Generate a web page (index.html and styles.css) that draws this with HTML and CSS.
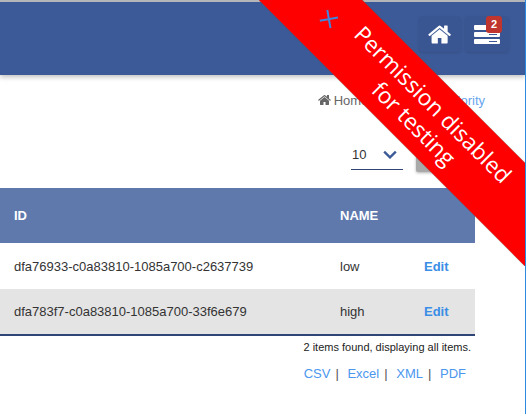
FILE: index.html
```html
<!DOCTYPE html>
<html lang="en">
<head>
  <meta charset="UTF-8" />
  <title>Priority</title>
  <link rel="stylesheet" href="styles.css">
</head>
<body>
  <!-- Top bar -->
  <header class="topbar">
    <a class="top-btn top-btn-home" href="#">
      <svg class="icon-home" viewBox="0 0 1792 1792"><path d="M1408 992v480q0 26-19 45t-45 19h-384v-384h-256v384h-384q-26 0-45-19t-19-45v-480q0-1 .5-3t.5-3l575-474 575 474q1 2 1 6zm223-69l-62 74q-8 9-21 11h-3q-13 0-21-7l-692-577-692 577q-12 8-24 7-13-2-21-11l-62-74q-8-10-7-23.5t11-21.5l719-599q32-26 76-26t76 26l244 204v-195q0-14 9-23t23-9h192q14 0 23 9t9 23v408l219 182q10 8 11 21.5t-7 23.5z"/></svg>
    </a>
    <a class="top-btn top-btn-stack" href="#">
      <span class="stack">
        <span class="stack-bar"></span>
        <span class="stack-bar"><i></i></span>
        <span class="stack-bar"><i></i></span>
      </span>
      <span class="badge">2</span>
    </a>
  </header>

  <!-- Breadcrumb -->
  <nav class="crumbs">
    <svg class="icon-crumb" viewBox="0 0 1792 1792"><path d="M1408 992v480q0 26-19 45t-45 19h-384v-384h-256v384h-384q-26 0-45-19t-19-45v-480q0-1 .5-3t.5-3l575-474 575 474q1 2 1 6zm223-69l-62 74q-8 9-21 11h-3q-13 0-21-7l-692-577-692 577q-12 8-24 7-13-2-21-11l-62-74q-8-10-7-23.5t11-21.5l719-599q32-26 76-26t76 26l244 204v-195q0-14 9-23t23-9h192q14 0 23 9t9 23v408l219 182q10 8 11 21.5t-7 23.5z"/></svg>
    <span class="crumb-home">Home</span>
    <span class="crumb-sep">/</span>
    <a href="#">Manage Priority</a>
  </nav>

  <!-- Page size + add button -->
  <div class="toolbar">
    <div class="page-size">
      <span>10</span>
      <svg class="chevron" viewBox="0 0 12 7"><path d="M1 1l5 5 5-5"/></svg>
    </div>
    <div class="add-btn"></div>
  </div>

  <table class="grid">
    <thead>
      <tr><th class="col-id">ID</th><th class="col-name">NAME</th><th></th></tr>
    </thead>
    <tbody>
      <tr><td>dfa76933-c0a83810-1085a700-c2637739</td><td>low</td><td><a class="edit" href="#">Edit</a></td></tr>
      <tr class="alt"><td>dfa783f7-c0a83810-1085a700-33f6e679</td><td>high</td><td><a class="edit" href="#">Edit</a></td></tr>
    </tbody>
  </table>

  <div class="grid-foot">
    <p class="found">2 items found, displaying all items.</p>
    <p class="exports">
      <a href="#">CSV</a><span class="sep">|</span>
      <a href="#">Excel</a><span class="sep">|</span>
      <a href="#">XML</a><span class="sep">|</span>
      <a href="#">PDF</a>
    </p>
  </div>

  <!-- Corner ribbon -->
  <div class="ribbon-box">
    <div class="ribbon">
      <svg class="ribbon-close" viewBox="0 0 20 20"><path d="M3.5 3.5l13 13M16.5 3.5l-13 13"/></svg>
      <span>Permission disabled</span>
      <span>for testing</span>
    </div>
  </div>
</body>
</html>
```

FILE: styles.css
```css
/* Reset & base styles */
* {
  margin: 0;
  padding: 0;
  box-sizing: border-box;
}
html, body {
  width: 100%;
  height: 100%;
  overflow: hidden;
  background: #fff;
  font-family: "Liberation Sans", Arial, sans-serif;
  color: #333;
}
body {
  position: relative;
  border-right: 1px solid #2a8ae0;
}
a {
  text-decoration: none;
}

/* Top bar */
.topbar {
  height: 75px;
  display: flex;
  justify-content: flex-end;
  align-items: flex-start;
  gap: 4px;
  padding: 14px 16px 0 0;
  background: #3d5a98;
  border-top: 2px solid #b4b6ba;
  box-shadow: 0 2px 5px rgba(0,0,0,0.25);
}
.top-btn {
  position: relative;
  display: flex;
  align-items: center;
  justify-content: center;
  height: 36px;
  border-radius: 4px;
  background: #3a5692;
  box-shadow: 0 1px 3px rgba(0,0,0,0.12);
}
.top-btn-home {
  width: 42px;
}
.top-btn-stack {
  width: 44px;
}
.icon-home {
  width: 25px;
  height: 25px;
  fill: #fff;
}
.stack {
  display: flex;
  flex-direction: column;
  gap: 2px;
  width: 26px;
}
.stack-bar {
  display: flex;
  justify-content: flex-end;
  align-items: center;
  height: 5px;
  background: #fff;
  border-radius: 1px;
  padding-right: 3px;
}
.stack-bar i {
  width: 8px;
  height: 1px;
  background: #3d5a98;
}
.badge {
  position: absolute;
  top: 0;
  right: 7px;
  width: 16px;
  height: 17px;
  line-height: 16px;
  text-align: center;
  font-size: 11px;
  font-weight: bold;
  color: #fff;
  background: #c0352d;
  border-radius: 3px;
}

/* Breadcrumb */
.crumbs {
  display: flex;
  justify-content: flex-end;
  align-items: center;
  gap: 11px;
  height: 20px;
  margin-top: 15px;
  padding-right: 40px;
  font-size: 13px;
  color: #666;
}
.crumbs a {
  color: #6aa5ee;
}
.icon-crumb {
  width: 14px;
  height: 14px;
  fill: #666;
  margin-right: -9px;
}

/* Page size + add button */
.toolbar {
  display: flex;
  align-items: flex-end;
  height: 40px;
  margin-top: 20px;
  padding-left: 351px;
}
.page-size {
  display: flex;
  justify-content: space-between;
  align-items: center;
  width: 52px;
  height: 30px;
  padding: 0 6px 0 1px;
  font-size: 13px;
  border-bottom: 1px solid #2f4577;
}
.chevron {
  width: 14px;
  height: 9px;
  fill: none;
  stroke: #3d5a98;
  stroke-width: 2;
}
.add-btn {
  width: 60px;
  height: 17px;
  margin-left: 13px;
  margin-bottom: -2px;
  background: #a9a9a9;
  border-radius: 2px;
  box-shadow: 0 1px 3px rgba(0,0,0,0.3);
}

/* Table */
.grid {
  width: 475px;
  margin-top: 18px;
  border-collapse: collapse;
  table-layout: fixed;
  font-size: 13px;
  border-bottom: 2px solid #2f4577;
}
.grid th {
  height: 55px;
  text-align: left;
  color: #fff;
  background: #6079ad;
}
.grid td {
  height: 46px;
}
.col-id {
  width: 340px;
}
.col-name {
  width: 84px;
}
.grid th.col-id, .grid td:first-child {
  padding-left: 14px;
}
.alt td {
  background: #e4e4e4;
}
.edit {
  font-size: 13px;
  font-weight: bold;
  color: #3a8ee6;
}

/* Under the table */
.grid-foot {
  width: 471px;
  text-align: right;
}
.found {
  font-size: 11px;
  color: #222;
  margin-top: 5px;
}
.exports {
  margin-top: 13px;
  padding-right: 5px;
  font-size: 13px;
  color: #555;
}
.exports a {
  color: #4b97ee;
}
.sep {
  margin: 0 5px 0 5px;
}

/* Corner ribbon */
.ribbon-box {
  position: absolute;
  top: 0;
  right: 0;
  width: 266px;
  height: 266px;
  overflow: hidden;
}
.ribbon {
  position: absolute;
  left: -35px;
  top: 77px;
  width: 400px;
  height: 73px;
  display: flex;
  flex-direction: column;
  align-items: center;
  justify-content: center;
  transform: rotate(45deg);
  background: #f00;
  color: #fff;
  font-family: "Open Sans", sans-serif;
  font-size: 22.5px;
  line-height: 27px;
  box-shadow: 0 0 1px #555;
}
.ribbon-close {
  position: absolute;
  left: 56px;
  top: 27px;
  width: 20px;
  height: 20px;
  fill: none;
  stroke: #3f86dd;
  stroke-width: 2;
  transform: rotate(-10deg);
}
```
